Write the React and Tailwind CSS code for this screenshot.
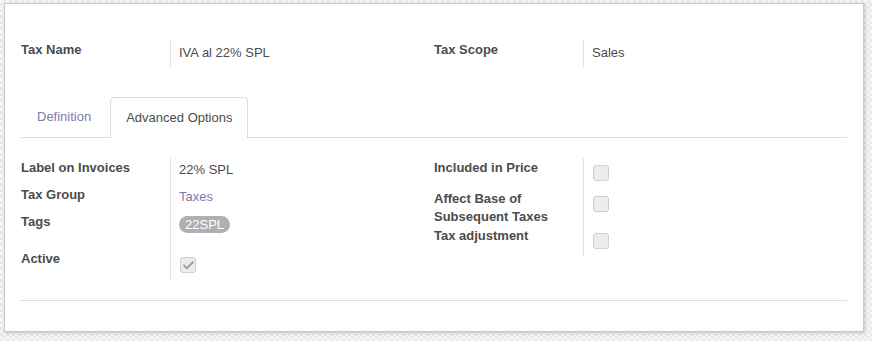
import { Check } from 'lucide-react'

function Field({ label, children, h, pad = 'pt-[2px]' }) {
  return (
    <div className={`flex ${h}`}>
      <div className="w-[149px] shrink-0 pt-px font-bold leading-[18px] text-[#4c4c4c]">{label}</div>
      <div className={`flex-1 border-l border-[#e2e2e2] pl-2 ${pad}`}>{children}</div>
    </div>
  )
}

function Box({ checked }) {
  return (
    <span className="flex h-4 w-4 items-center justify-center rounded-[3px] border border-[#cfcfcf] bg-[#ececec]">
      {checked && <Check size={13} strokeWidth={3.5} className="text-[#a0a0a0]" />}
    </span>
  )
}

export default function App() {
  return (
    <div className="h-[341px] w-[872px] bg-[repeating-conic-gradient(#e9e9e9_0_25%,#f6f6f6_0_50%)] bg-[length:6px_6px] pl-[4px] pt-[3px] font-['Liberation_Sans',Arial,sans-serif] text-[13px] text-[#4c4c4c]">
      <div className="h-[329px] w-[860px] border border-[#c8c8d0] bg-white px-4 pt-[36px] shadow-[1px_1px_3px_rgba(0,0,0,0.2)]">
        {/* header fields */}
        <div className="grid grid-cols-2">
          <Field label="Tax Name" h="h-[27px]" pad="pt-[3px]">IVA al 22% SPL</Field>
          <Field label="Tax Scope" h="h-[27px]" pad="pt-[3px]">Sales</Field>
        </div>

        {/* notebook tabs */}
        <div className="mt-[30px] flex h-[41px] border-b border-[#dddddd]">
          <div className="mr-[3px] flex items-center px-4 text-[#7c7bad]">Definition</div>
          <div className="-mb-px flex items-center rounded-t-[4px] border border-b-0 border-[#dddddd] bg-white px-[15px]">
            Advanced Options
          </div>
        </div>

        <div className="mt-[20px] grid grid-cols-2">
          <div>
            <Field label="Label on Invoices" h="h-[27px]">22% SPL</Field>
            <Field label="Tax Group" h="h-[27px]">
              <span className="text-[#7c7bad]">Taxes</span>
            </Field>
            <Field label="Tags" h="h-[37px]" pad="pt-[3px]">
              <span className="inline-flex h-[17px] items-center rounded-full bg-[#adb0b4] px-[6px] leading-none text-white">
                22SPL
              </span>
            </Field>
            <Field label="Active" h="h-[31px]" pad="pt-[8px] pl-[9px]">
              <Box checked />
            </Field>
          </div>
          <div>
            <Field label="Included in Price" h="h-[31px]" pad="pt-[7px] pl-[9px]">
              <Box />
            </Field>
            <Field
              label={
                <>
                  Affect Base of
                  <br />
                  Subsequent Taxes
                </>
              }
              h="h-[37px]"
              pad="pt-[7px] pl-[9px]"
            >
              <Box />
            </Field>
            <Field label="Tax adjustment" h="h-[30px]" pad="pt-[7px] pl-[9px]">
              <Box />
            </Field>
          </div>
        </div>

        <div className="mt-[20px] border-t border-[#dddddd]" />
      </div>
    </div>
  )
}
